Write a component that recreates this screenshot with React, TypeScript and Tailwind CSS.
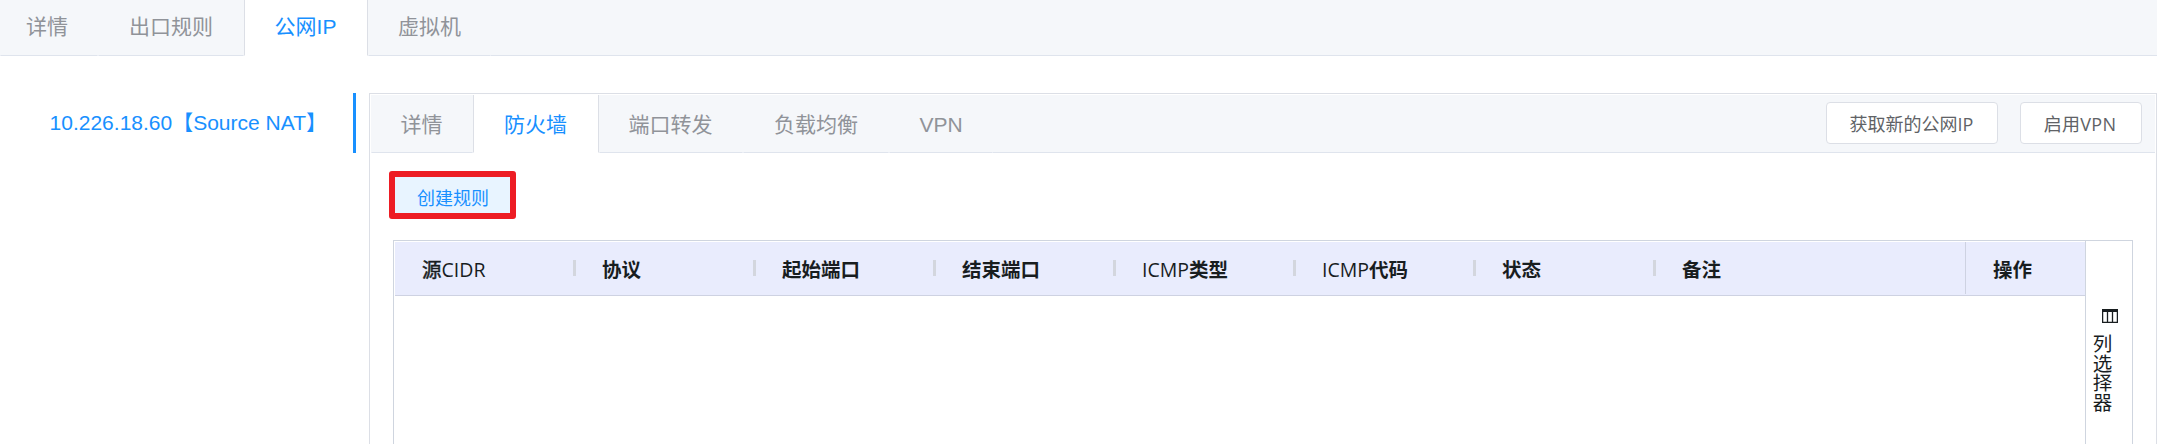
import React from "react";

const sans = "font-['Liberation_Sans','Noto_Sans_CJK_SC',sans-serif]";
const ui = "font-['Open_Sans','Noto_Sans_CJK_SC',sans-serif]";

function Tab({ label, active = false, className = "" }: { label: string; active?: boolean; className?: string }) {
  return (
    <div
      className={`flex shrink-0 items-center justify-center border-x text-[21px] leading-none ${
        active
          ? "border-[#dcdfe6] border-b border-b-white bg-white text-[#1890ff]"
          : "border-transparent border-b border-b-[#dfe4ed] text-[#909399]"
      } ${className}`}
    >
      <span className="whitespace-nowrap">{label}</span>
    </div>
  );
}

const columns = [
  { cn: "源", before: true, latin: "CIDR" },
  { cn: "协议" },
  { cn: "起始端口" },
  { cn: "结束端口" },
  { cn: "类型", latin: "ICMP" },
  { cn: "代码", latin: "ICMP" },
  { cn: "状态" },
];

function ColumnIcon() {
  return (
    <svg width="16" height="14" viewBox="0 0 16 14" fill="none" stroke="#181d1f" className="block">
      <path d="M0 1.5H16" strokeWidth="3" />
      <path d="M0.6 1V13.4H15.4V1M5.5 2V13M10.5 2V13" strokeWidth="1.3" />
    </svg>
  );
}

export default function App() {
  return (
    <div className={`flex h-[444px] w-[2157px] flex-col overflow-hidden bg-white ${sans}`}>
      <nav className="flex h-[56px] shrink-0 bg-[#f5f7fa]">
        <Tab label="详情" className="w-[98px] pr-1 pb-[2px]" />
        <Tab label="出口规则" className="w-[146px] pb-[2px]" />
        <Tab label="公网IP" active className="w-[124px] pr-px pb-[2px]" />
        <Tab label="虚拟机" className="w-[123px] pb-[2px]" />
        <div className="flex-1 border-b border-[#dfe4ed]" />
      </nav>

      <div className="flex min-h-0 flex-1 pt-[37px]">
        <aside className="flex h-[60px] w-[356px] shrink-0 items-center justify-end border-r-[3px] border-[#1890ff] pr-[26px] pb-[2px] text-[21px] leading-none text-[#1890ff]">
          <span className="whitespace-nowrap">10.226.18.60【Source NAT】</span>
        </aside>

        <main className="ml-[13px] flex min-w-0 flex-1 flex-col border border-b-0 border-[#dcdfe6] px-px pt-px">
          <div className="flex h-[58px] shrink-0 bg-[#f5f7fa]">
            <Tab label="详情" className="w-[102px] pt-[2px] pr-px" />
            <Tab label="防火墙" active className="w-[126px] pt-[2px] pr-px" />
            <Tab label="端口转发" className="w-[144px] pt-[2px] pr-px" />
            <Tab label="负载均衡" className="w-[146px] pt-[2px]" />
            <Tab label="VPN" className="w-[104px] pt-[2px]" />
            <div className="flex flex-1 items-start justify-end gap-[22px] border-b border-[#dfe4ed] pt-[7px] pr-[13px] text-[18px] text-[#606266]">
              <button className={`h-[42px] w-[172px] rounded-[4px] border border-[#dcdfe6] bg-white pt-px pr-px leading-none ${ui}`}>获取新的公网IP</button>
              <button className={`h-[42px] w-[122px] rounded-[4px] border border-[#dcdfe6] bg-white pt-px pr-[2px] leading-none tracking-[0.3px] ${ui}`}>启用VPN</button>
            </div>
          </div>

          <div className="mt-[18px] ml-[18px] flex h-[48px] w-[127px] shrink-0 rounded-[3px] border-[6px] border-[#ed1c24]">
            <button className="flex-1 bg-[#e8f4ff] pt-[7px] pl-px text-[18px] leading-none text-[#1890ff]">创建规则</button>
          </div>

          <section className={`mt-[21px] mr-[22px] ml-[22px] flex min-h-0 flex-1 border border-b-0 border-[#cfd5df] text-[19.5px] text-[#181d1f] ${ui}`}>
            <div className="flex min-w-0 flex-1 flex-col pt-px pl-px">
              <div className="flex h-[54px] shrink-0 border-b border-[#ced2e2] bg-[#e9ecfd] leading-none">
                {columns.map((c, i) => (
                  <div key={i} className="flex h-[53px] w-[180px] shrink-0 items-center justify-between pl-[27px]">
                    <span className="pt-[2px] whitespace-nowrap">
                      {c.before ? (
                        <>
                          <span className="[-webkit-text-stroke:0.5px_#181d1f]">{c.cn}</span>
                          {c.latin}
                        </>
                      ) : (
                        <>
                          {c.latin}
                          <span className="font-bold">{c.cn}</span>
                        </>
                      )}
                    </span>
                    <i className="mb-px block h-[16px] w-[3px] translate-x-px bg-[#d3d6de]" />
                  </div>
                ))}
                <div className="flex flex-1 items-center pt-[2px] pl-[27px] font-bold">备注</div>
                <div className="flex h-[52px] w-[120px] items-center border-l border-[#ced2e2] pt-[3px] pl-[27px] font-bold">操作</div>
              </div>
            </div>
            <div className="flex w-[47px] shrink-0 flex-col border-l border-[#cfd5df] pt-[68px]">
              <div className="ml-[16px]">
                <ColumnIcon />
              </div>
              <div className="mt-[11px] ml-[5px] w-[20px] text-[19.5px] leading-[20px] [writing-mode:vertical-rl]">列选择器</div>
            </div>
          </section>
        </main>
      </div>
    </div>
  );
}
